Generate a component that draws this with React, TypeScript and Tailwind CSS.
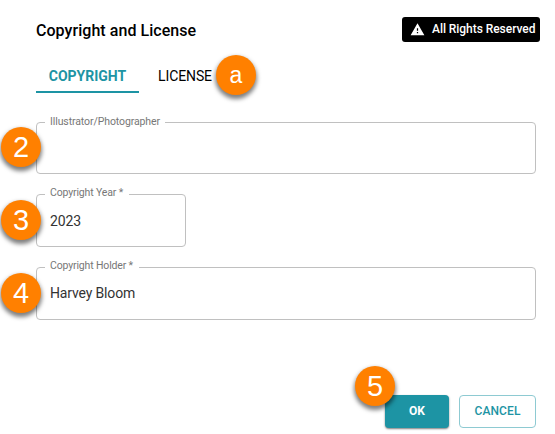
import type { ReactNode } from "react";

function Badge({ children, className }: { children: ReactNode; className: string }) {
  return (
    <span
      className={`absolute z-10 flex size-10 items-center justify-center rounded-full bg-[#ff8000] font-['Liberation_Sans',sans-serif] leading-none font-normal text-white shadow-[0_3px_4px_1px_rgba(0,0,0,0.5)] ${className}`}
    >
      {children}
    </span>
  );
}

interface FieldProps {
  label: string;
  labelClass: string;
  value?: string;
  valueClass?: string;
  step: string;
  stepClass: string;
  className: string;
}

function Field({ label, labelClass, value, valueClass = "", step, stepClass, className }: FieldProps) {
  return (
    <div className={`relative flex items-center rounded-[4px] border border-[#c0c0c0] px-[13px] ${className}`}>
      <span
        className={`absolute left-2 h-4 bg-white px-[5px] text-[10.5px] leading-4 whitespace-nowrap text-[#777] ${labelClass}`}
      >
        {label}
      </span>
      <span className={`text-[14px] leading-5 tracking-[-0.15px] text-[#333] ${valueClass}`}>{value}</span>
      <Badge className={`-left-9 text-[29px] ${stepClass}`}>{step}</Badge>
    </div>
  );
}

export default function App() {
  return (
    <div className="flex h-[434px] w-[555px] flex-col overflow-hidden bg-white pl-9 font-[Roboto,sans-serif] text-black">
      <header className="flex items-start justify-between pt-[17px] pr-[15px]">
        <h1 className="pt-[2px] text-[16px] leading-6 font-medium tracking-[0.05px]">Copyright and License</h1>
        <div className="flex h-[25px] w-[138px] items-center rounded-[3px] bg-black pl-2 text-white">
          <svg viewBox="0 0 24 24" className="size-[15px]" fill="currentColor">
            <path d="M1 21h22L12 2 1 21zm12-3h-2v-2h2v2zm0-4h-2v-4h2v4z" />
          </svg>
          <span className="mb-px ml-[7px] text-[12px] leading-4 font-medium tracking-[-0.05px] whitespace-nowrap">All Rights Reserved</span>
        </div>
      </header>

      <nav className="mt-[18px] flex h-[32px] items-stretch text-[14px] leading-[31px]">
        <button className="w-[103px] border-b-2 border-[#1d94a4] text-center font-bold text-[#1d94a4]">COPYRIGHT</button>
        <div className="relative ml-[19px]">
          <button className="tracking-[-0.1px]">LICENSE</button>
          <Badge className="-top-[6px] left-[58px] text-[23px]">a</Badge>
        </div>
      </nav>

      <main className="mt-[29px] flex flex-col">
        <Field label="Illustrator/Photographer" labelClass="-top-[9px] w-[120px] tracking-[-0.1px]" step="2" stepClass="top-1" className="h-[52px] w-[500px]" />
        <Field label="Copyright Year *" labelClass="-top-[10px] w-[84px] tracking-[-0.15px]" value="2023" step="3" stepClass="top-[5px]" className="mt-5 h-[53px] w-[150px]" />
        <Field label="Copyright Holder *" labelClass="-top-[10px] w-[94px] tracking-[-0.15px]" value="Harvey Bloom" valueClass="mb-px" step="4" stepClass="top-[5px]" className="mt-5 h-[53px] w-[500px]" />
      </main>

      <footer className="mt-[75px] flex justify-end gap-[10px] pr-[19px] text-[12px] leading-4 font-bold">
        <div className="relative">
          <button className="h-[33px] w-16 rounded-[4px] bg-[#1d94a4] pb-[2px] text-white shadow-[0_1px_2px_rgba(0,0,0,0.5)]">OK</button>
          <Badge className="-left-[30px] -top-[29px] text-[29px]">5</Badge>
        </div>
        <button className="h-[33px] w-[77px] rounded-[4px] border border-[#8ecad2] pb-[2px] font-medium tracking-[0.1px] text-[#1d94a4]">CANCEL</button>
      </footer>
    </div>
  );
}
